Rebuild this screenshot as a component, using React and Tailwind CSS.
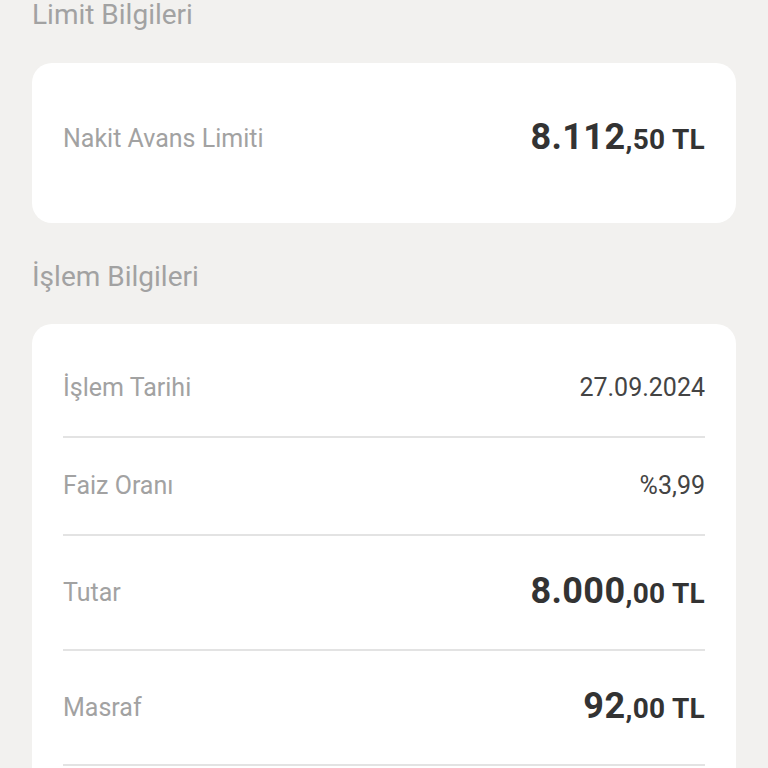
const ROWS = [
  { label: "İşlem Tarihi", value: "27.09.2024" },
  { label: "Faiz Oranı", value: "%3,99" },
  { label: "Tutar", amount: ["8.000", ",00 TL"] },
  { label: "Masraf", amount: ["92", ",00 TL"] },
];

function Amount({ whole, rest }) {
  return (
    <span className="flex items-baseline whitespace-nowrap font-bold leading-[42px] text-[#333333]">
      <span className="text-[36px] tracking-[0.4px]">{whole}</span>
      <span className="text-[28px] tracking-[0.3px]">{rest}</span>
    </span>
  );
}

function Row({ row, first }) {
  return (
    <div
      className={`flex items-center justify-between border-b-2 border-[#e3e3e3] ${
        first ? "pt-[50px] pb-[34px]" : "py-[34px]"
      }`}
    >
      <span className="text-[25px] leading-7 text-[#a2a2a2]">{row.label}</span>
      {row.amount ? (
        <Amount whole={row.amount[0]} rest={row.amount[1]} />
      ) : (
        <span className="text-[25px] leading-7 text-[#444444]">{row.value}</span>
      )}
    </div>
  );
}

export default function App() {
  return (
    <div className="h-screen overflow-hidden bg-[#f2f1ef] px-8 font-['Roboto',sans-serif]">
      <h2 className="-mt-px text-[28px] leading-8 text-[#a2a2a2]">Limit Bilgileri</h2>

      <section className="mt-[32px] rounded-[20px] bg-white px-[31px] pt-[53px] pb-[62px]">
        <div className="flex items-center justify-between">
          <span className="text-[25px] leading-7 text-[#a2a2a2]">Nakit Avans Limiti</span>
          <Amount whole="8.112" rest=",50 TL" />
        </div>
      </section>

      <h2 className="mt-[38px] text-[28px] leading-8 text-[#a2a2a2]">İşlem Bilgileri</h2>

      <section className="mt-[31px] rounded-[20px] bg-white px-[31px]">
        {ROWS.map((row, i) => (
          <Row key={row.label} row={row} first={i === 0} />
        ))}
        <div className="h-24" />
      </section>
    </div>
  );
}
